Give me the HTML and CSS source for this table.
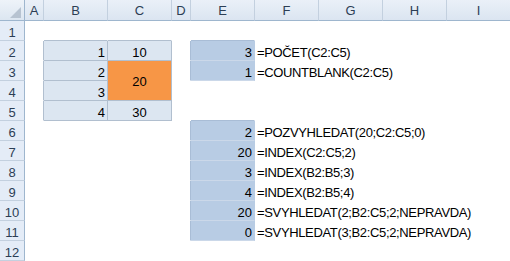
FILE: index.html
```html
<!DOCTYPE html>
<html>
<head>
<meta charset="utf-8">
<link rel="stylesheet" href="styles.css">
</head>
<body>
<div class="sheet">
  <div class="corner"><svg class="tri" width="11" height="11" viewBox="0 0 11 11"><polygon points="11,0 11,11 0,11" fill="#b7c3d1"/></svg></div>
  <div class="ch">A</div><div class="ch">B</div><div class="ch">C</div><div class="ch">D</div><div class="ch">E</div><div class="ch">F</div><div class="ch">G</div><div class="ch">H</div><div class="ch last">I</div>

  <div class="rh">1</div><div class="c"></div><div class="c bb"></div><div class="c bb"></div><div class="c"></div><div class="c eb"></div><div class="c"></div><div class="c"></div><div class="c"></div><div class="c"></div>

  <div class="rh">2</div><div class="c br"></div><div class="c lt num">1</div><div class="c lt ctr">10</div><div class="c er"></div><div class="c ev num">3</div><div class="c txt">=POČET(C2:C5)</div><div class="c"></div><div class="c"></div><div class="c"></div>

  <div class="rh">3</div><div class="c br"></div><div class="c lt num">2</div><div class="c org">20</div><div class="c er"></div><div class="c ev num">1</div><div class="c txt">=COUNTBLANK(C2:C5)</div><div class="c"></div><div class="c"></div><div class="c"></div>

  <div class="rh">4</div><div class="c br"></div><div class="c lt num">3</div><div class="c"></div><div class="c"></div><div class="c"></div><div class="c"></div><div class="c"></div><div class="c"></div>

  <div class="rh">5</div><div class="c br"></div><div class="c lt num">4</div><div class="c lt ctr">30</div><div class="c"></div><div class="c eb"></div><div class="c"></div><div class="c"></div><div class="c"></div><div class="c"></div>

  <div class="rh">6</div><div class="c"></div><div class="c"></div><div class="c"></div><div class="c er"></div><div class="c ev num">2</div><div class="c txt">=POZVYHLEDAT(20;C2:C5;0)</div><div class="c"></div><div class="c"></div><div class="c"></div>

  <div class="rh">7</div><div class="c"></div><div class="c"></div><div class="c"></div><div class="c er"></div><div class="c ev num">20</div><div class="c txt">=INDEX(C2:C5;2)</div><div class="c"></div><div class="c"></div><div class="c"></div>

  <div class="rh">8</div><div class="c"></div><div class="c"></div><div class="c"></div><div class="c er"></div><div class="c ev num">3</div><div class="c txt">=INDEX(B2:B5;3)</div><div class="c"></div><div class="c"></div><div class="c"></div>

  <div class="rh">9</div><div class="c"></div><div class="c"></div><div class="c"></div><div class="c er"></div><div class="c ev num">4</div><div class="c txt">=INDEX(B2:B5;4)</div><div class="c"></div><div class="c"></div><div class="c"></div>

  <div class="rh">10</div><div class="c"></div><div class="c"></div><div class="c"></div><div class="c er"></div><div class="c ev num">20</div><div class="c txt">=SVYHLEDAT(2;B2:C5;2;NEPRAVDA)</div><div class="c"></div><div class="c"></div><div class="c"></div>

  <div class="rh">11</div><div class="c"></div><div class="c"></div><div class="c"></div><div class="c er"></div><div class="c ev num">0</div><div class="c txt">=SVYHLEDAT(3;B2:C5;2;NEPRAVDA)</div><div class="c"></div><div class="c"></div><div class="c"></div>

  <div class="rh">12</div><div class="c"></div><div class="c"></div><div class="c"></div><div class="c"></div><div class="c"></div><div class="c"></div><div class="c"></div><div class="c"></div><div class="c"></div>
</div>
</body>
</html>
```
FILE: styles.css
```css
html, body {
  margin: 0;
  padding: 0;
  background: #ffffff;
  overflow: hidden;
}
.sheet {
  display: grid;
  grid-template-columns: 25px 19px 64px 64px 19px 64px 64px 64px 64px 63px;
  grid-template-rows: 21px repeat(12, 20px);
  width: 510px;
  height: 261px;
  font-family: "Liberation Sans", Arial, sans-serif;
  font-size: 13px;
  line-height: 15px;
  color: #000;
}
.sheet > div {
  box-sizing: border-box;
  white-space: nowrap;
}
.corner {
  position: relative;
  background: linear-gradient(#eef3f9, #dce6f1);
  border-right: 1px solid #9eb6ce;
  border-bottom: 1px solid #9eb6ce;
}
.tri {
  position: absolute;
  right: 3px;
  bottom: 2px;
}
.ch {
  background: linear-gradient(#eaf0f8, #dbe5f1);
  border-right: 1px solid #c3d0df;
  border-bottom: 1px solid #9eb6ce;
  color: #2c3e55;
  display: flex;
  align-items: center;
  justify-content: center;
  padding-top: 1px;
}
.ch.last {
  border-right: none;
}
.rh {
  background: #e4ecf7;
  border-right: 1px solid #9eb6ce;
  border-bottom: 1px solid #c3d0df;
  color: #2c3e55;
  display: flex;
  align-items: flex-end;
  justify-content: center;
}
.c {
  display: flex;
  align-items: flex-end;
  border-right: 1px solid transparent;
  border-bottom: 1px solid transparent;
}
.bb { border-bottom-color: #b1bfcf; }
.br { border-right-color: #b1bfcf; }
.lt {
  background: #dce6f1;
  border-right-color: #b1bfcf;
  border-bottom-color: #b1bfcf;
}
.org {
  grid-row: span 2;
  background: #f79646;
  border-right-color: #b1bfcf;
  border-bottom-color: #b1bfcf;
  align-items: center;
  justify-content: center;
  padding-top: 2px;
}
.eb { border-bottom-color: #a9bdd6; }
.er { border-right-color: #a9bdd6; }
.ev {
  background: #b8cce4;
  border-right-color: #b8cce4;
  border-bottom-color: #cbd8e9;
}
.num {
  justify-content: flex-end;
  padding-right: 2px;
}
.ctr {
  justify-content: center;
}
.txt {
  padding-left: 2px;
  letter-spacing: -0.35px;
}
```
